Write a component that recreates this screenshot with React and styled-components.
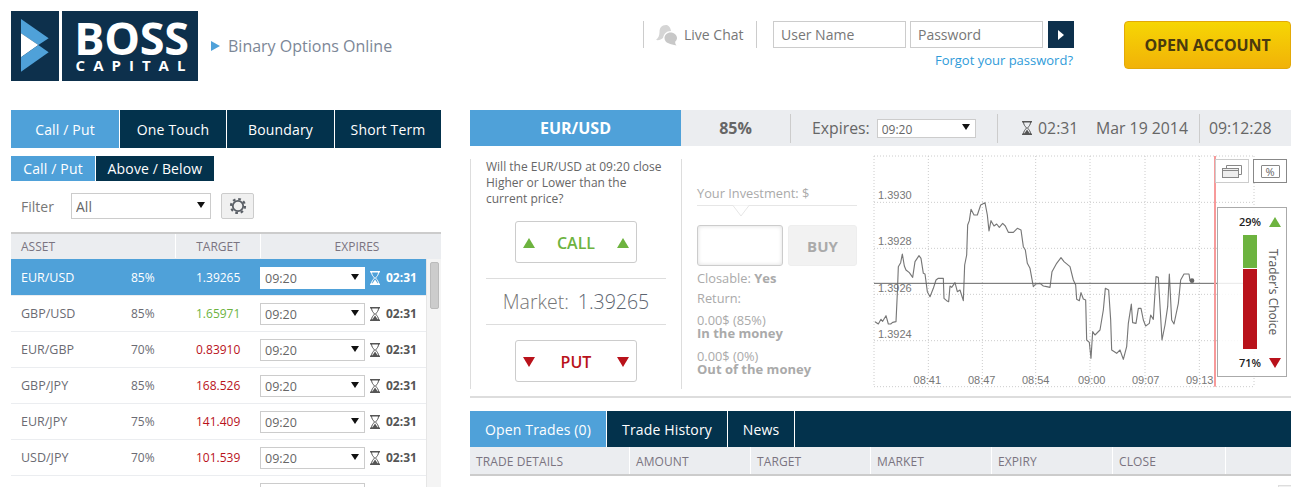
import React from 'react';
import styled, { createGlobalStyle } from 'styled-components';

const BLUE = '#4fa1d9';
const NAVY = '#03324c';
const PALE = '#ebedf0';
const GREEN = '#6db33f';
const RED = '#b9121b';

const GlobalStyle = createGlobalStyle`
    html, body {
        margin: 0;
        padding: 0;
        background: #fff;
        overflow: hidden;
    }
    body {
        font-family: 'Open Sans', 'Liberation Sans', sans-serif;
        color: #777;
    }
    * {
        box-sizing: border-box;
    }
`;

const Page = styled.div`
    width: 1302px;
    height: 487px;
    overflow: hidden;
`;

/* header */
const Header = styled.header`
    display: flex;
    align-items: flex-start;
    height: 110px;
    padding: 11px 11px 0;
`;
const Logo = styled.div`
    display: flex;
    gap: 3px;
    height: 70px;
`;
const LogoMark = styled.div`
    width: 48px;
    height: 70px;
    background: #0d304c;
    svg {
        display: block;
    }
`;
const LogoWords = styled.div`
    width: 136px;
    height: 70px;
    background: #0d304c;
    color: #fff;
    text-align: center;
    font-weight: 700;
`;
const LogoBoss = styled.div`
    font-size: 45px;
    line-height: 44px;
    margin: 5px 0 0 3px;
    letter-spacing: -0.3px;
`;
const LogoCapital = styled.div`
    font-size: 15px;
    line-height: 15px;
    letter-spacing: 8px;
    margin: -2px 0 0 9px;
`;
const Tagline = styled.div`
    display: flex;
    align-items: center;
    gap: 8px;
    margin: 24px 0 0 13px;
    font-size: 16px;
    line-height: 22px;
    color: #7c8797;
`;
const TaglineArrow = styled.span`
    width: 0;
    height: 0;
    border-left: 9px solid ${BLUE};
    border-top: 5.5px solid transparent;
    border-bottom: 5.5px solid transparent;
`;
const HeaderRight = styled.div`
    display: flex;
    align-items: flex-start;
    margin: 10px 0 0 auto;
`;
const Chat = styled.div`
    display: flex;
    align-items: center;
    gap: 6px;
    width: 114px;
    height: 27px;
    padding-left: 12px;
    border-left: 1px solid #ccc;
    border-right: 1px solid #ccc;
    font-size: 14px;
`;
const Login = styled.div`
    width: 301px;
    margin-left: 16px;
`;
const LoginRow = styled.div`
    display: flex;
    gap: 4px;
`;
const LoginInput = styled.input`
    width: 133px;
    height: 27px;
    padding: 0 7px;
    border: 1px solid #ccc;
    background: #fff;
    font: 14px 'Open Sans', sans-serif;
    outline: none;
    &::placeholder {
        color: #777;
        opacity: 1;
    }
`;
const LoginButton = styled.button`
    display: flex;
    align-items: center;
    justify-content: center;
    width: 26px;
    height: 27px;
    margin-left: 1px;
    padding: 0;
    border: 0;
    background: #0d304c;
    &::after {
        content: '';
        border-left: 6px solid #fff;
        border-top: 5px solid transparent;
        border-bottom: 5px solid transparent;
    }
`;
const Forgot = styled.a`
    display: block;
    margin: 3px 1px 0 0;
    text-align: right;
    font-size: 13px;
    line-height: 18px;
    color: #2f9bd9;
`;
const OpenAccount = styled.button`
    width: 167px;
    height: 48px;
    margin-left: 50px;
    border: 1px solid #e3a908;
    border-radius: 4px;
    background: linear-gradient(#f6d604, #f1b208);
    color: #4a3a0e;
    font: 700 16px 'Open Sans', sans-serif;
    letter-spacing: -0.1px;
`;

/* main two column layout */
const Main = styled.main`
    display: flex;
    gap: 29px;
    padding-left: 11px;
`;
const LeftColumn = styled.section`
    width: 430px;
`;
const RightColumn = styled.section`
    width: 821px;
`;

/* tabs */
const TabBar = styled.div`
    display: flex;
    gap: 1px;
    height: ${(p) => p.$height}px;
    margin-top: ${(p) => p.$top || 0}px;
`;
const Tab = styled.div`
    display: flex;
    align-items: center;
    justify-content: center;
    flex: ${(p) => (p.$width ? `0 0 ${p.$width}px` : '1')};
    background: ${(p) => (p.$active ? BLUE : NAVY)};
    color: #fff;
    font-size: 14px;
    letter-spacing: 0.15px;
`;

/* selects */
const SelectWrap = styled.div`
    position: relative;
    flex: none;
    width: ${(p) => p.$width}px;
    height: ${(p) => p.$height}px;
    &::after {
        content: '';
        position: absolute;
        right: 6px;
        top: 50%;
        margin-top: -4px;
        border-top: 6px solid #111;
        border-left: 4px solid transparent;
        border-right: 4px solid transparent;
        pointer-events: none;
    }
`;
const NativeSelect = styled.select`
    appearance: none;
    display: block;
    width: 100%;
    height: 100%;
    padding: 1px 0 0 ${(p) => p.$pad}px;
    border: ${(p) => (p.$light ? '1px solid #fff' : '1px solid #ccc')};
    border-radius: 0;
    background: #fff;
    color: #666;
    font: ${(p) => p.$size}px 'Open Sans', sans-serif;
    outline: none;
`;
const Select = ({ value, width, height, pad = 4, size = 12.500, light }) => (
    <SelectWrap $width={width} $height={height}>
        <NativeSelect defaultValue={value} $pad={pad} $size={size} $light={light}>
            <option>{value}</option>
        </NativeSelect>
    </SelectWrap>
);

const Hourglass = ({ color = '#555', height = 14 }) => (
    <svg width={height * 0.72} height={height} viewBox="0 0 10 14" fill="none" style={{ color, flex: 'none' }}>
        <path d="M0 .7h10M0 13.3h10" stroke="currentColor" strokeWidth="1.4" />
        <path d="M1.500 1c0 3 1.500 4 3 6-1.500 2-3 3-3 6M8.500 1c0 3-1.500 4-3 6 1.500 2 3 3 3 6" stroke="currentColor" strokeWidth="1" />
        <path d="M5 8.500 2 13h6z" fill="currentColor" />
    </svg>
);

/* asset filter */
const FilterRow = styled.div`
    display: flex;
    align-items: center;
    height: 26px;
    margin-top: 12px;
    padding-left: 10px;
    font-size: 14px;
`;
const FilterLabel = styled.span`
    width: 50px;
`;
const GearButton = styled.div`
    display: flex;
    align-items: center;
    justify-content: center;
    width: 33px;
    height: 26px;
    margin-left: 10px;
    border: 1px solid #ccc;
    border-radius: 2px;
    background: #f0f0f0;
`;

/* asset table */
const AssetHead = styled.div`
    display: grid;
    grid-template-columns: 164px 85px 1fr;
    height: 27px;
    margin-top: 13px;
    padding-bottom: 1px;
    border-top: 2px solid #ccc;
    background: ${PALE};
    font-size: 12px;
`;
const AssetHeadCell = styled.div`
    display: flex;
    align-items: center;
    justify-content: ${(p) => (p.$first ? 'flex-start' : 'center')};
    padding-left: ${(p) => p.$pad || 0}px;
    border-left: ${(p) => (p.$first ? '0' : '1px solid #fff')};
    color: #7a7480;
`;
const AssetBody = styled.div`
    display: flex;
    height: 228px;
    overflow: hidden;
`;
const AssetRows = styled.div`
    width: 415px;
`;
const AssetRow = styled.div`
    display: grid;
    grid-template-columns: 110px 65px 64px 105px 21px 1fr;
    align-items: center;
    height: 36px;
    padding-left: 10px;
    border-bottom: 1px solid #ebedf0;
    font-size: 12px;
    color: ${(p) => (p.$active ? '#fff' : '#6b6b73')};
    background: ${(p) => (p.$active ? BLUE : '#fff')};
    &:first-child {
        height: 37px;
        padding-top: 1px;
    }
`;
const AssetName = styled.span`
    font-size: 12.500px;
`;
const Target = styled.span`
    color: ${(p) => p.$color || 'inherit'};
`;
const RowTimer = styled.span`
    display: flex;
    align-items: center;
    padding-left: 5px;
`;
const RowTime = styled.span`
    font-weight: 700;
    color: ${(p) => (p.$active ? '#fff' : '#555')};
`;
const ScrollTrack = styled.div`
    width: 15px;
    padding: 3px 2px 0 3px;
    border-left: 1px solid #e6e6e6;
    background: #f4f4f4;
`;
const ScrollThumb = styled.div`
    height: 47px;
    border: 1px solid #bbb;
    border-radius: 2px;
    background: #ccc;
`;

/* instrument bar */
const InstrumentBar = styled.div`
    display: flex;
    align-items: center;
    height: 36px;
    background: ${PALE};
    color: #666;
`;
const InstrumentName = styled.div`
    display: flex;
    align-items: center;
    justify-content: center;
    align-self: stretch;
    width: 211px;
    background: ${BLUE};
    color: #fff;
    font-size: 16px;
    font-weight: 700;
`;
const Payout = styled.div`
    width: 109px;
    text-align: center;
    font-size: 16px;
    font-weight: 700;
`;
const BarCell = styled.div`
    display: flex;
    align-items: center;
    width: ${(p) => p.$width}px;
    height: 29px;
    padding-left: ${(p) => p.$pad}px;
    border-left: 1px solid #ccc;
    font-size: 15.800px;
    gap: ${(p) => p.$gap || 0}px;
`;
const BarTime = styled.span`
    width: 58px;
    margin-left: 6px;
`;

/* trade area */
const TradeArea = styled.div`
    display: flex;
    height: 252px;
    padding-top: 4px;
    border-bottom: 2px solid #ddd;
`;
const QuestionPanel = styled.div`
    width: 212px;
    height: 230px;
    margin-top: 9px;
    padding: 0 15px;
    border-left: 1px solid #ddd;
    border-right: 1px solid #ddd;
`;
const Question = styled.p`
    margin: 0 0 14px;
    font-size: 12px;
    line-height: 16px;
    color: #666;
`;
const TradeButton = styled.div`
    display: flex;
    align-items: center;
    justify-content: space-between;
    width: 122px;
    height: 42px;
    margin: 0 auto;
    padding: 1px 7px 0;
    border: 1px solid #ccc;
    border-radius: 3px;
    font-size: 16px;
    font-weight: 600;
    color: ${(p) => p.$color};
`;
const Triangle = styled.span`
    width: 0;
    height: 0;
    border-left: 6.500px solid transparent;
    border-right: 6.500px solid transparent;
    ${(p) => (p.$down ? 'border-top' : 'border-bottom')}: 10px solid ${(p) => p.$color};
`;
const MarketRow = styled.div`
    display: flex;
    align-items: center;
    justify-content: center;
    gap: 9px;
    height: 47px;
    margin: 15px 0;
    border-top: 1px solid #ddd;
    border-bottom: 1px solid #ddd;
    font-size: 19.500px;
    font-weight: 300;
    color: #777;
`;
const MarketValue = styled.span`
    color: #5c6470;
`;
const InvestPanel = styled.div`
    width: 188px;
    padding: 35px 13px 0 15px;
    font-size: 12.800px;
    color: #aaa;
`;
const InvestLabel = styled.div`
    position: relative;
    padding-bottom: 4px;
    border-bottom: 1px solid #e6e6e6;
    line-height: 16px;
    svg {
        position: absolute;
        left: 36px;
        top: 20px;
    }
`;
const InvestRow = styled.div`
    display: flex;
    gap: 5px;
    height: 41px;
    margin: 19px 0 4px;
`;
const AmountInput = styled.input`
    width: 86px;
    border: 1px solid #ccc;
    border-radius: 3px;
    box-shadow: inset 0 0 4px #ddd;
    outline: none;
`;
const BuyButton = styled.div`
    display: flex;
    align-items: center;
    justify-content: center;
    width: 69px;
    border: 1px solid #eee;
    border-radius: 3px;
    background: #f2f2f2;
    color: #aaa;
    font-size: 15px;
    font-weight: 700;
`;
const InfoLine = styled.div`
    margin-top: ${(p) => p.$top || 0}px;
    line-height: 16px;
`;
const ReturnBlock = styled.div`
    margin-top: ${(p) => p.$top}px;
    line-height: 13px;
`;
const Strong = styled.b`
    font-weight: 700;
    font-size: 13px;
`;

/* chart */
const ChartPane = styled.div`
    position: relative;
    width: 421px;
    height: 248px;
    svg.plot {
        display: block;
        font-family: 'Liberation Sans', Arial, sans-serif;
    }
`;
const ChartButton = styled.div`
    position: absolute;
    left: ${(p) => p.$left}px;
    top: 9px;
    display: flex;
    align-items: center;
    justify-content: center;
    width: 34px;
    height: 24px;
    background: #fff;
    border: 1px solid ${(p) => (p.$dark ? '#888' : '#ccc')};
`;
const PercentTag = styled.span`
    display: block;
    width: 19px;
    height: 13px;
    border: 1px solid #888;
    border-radius: 1px;
    text-align: center;
    font-size: 11px;
    line-height: 11px;
    color: #666;
`;
const ChoicePanel = styled.div`
    position: absolute;
    left: 347px;
    top: 57px;
    display: flex;
    flex-direction: column;
    width: 70px;
    height: 170px;
    border: 1px solid #aaa;
    background: rgba(255, 255, 255, 0.85);
`;
const ChoiceHead = styled.div`
    display: flex;
    align-items: center;
    gap: 8px;
    height: 27px;
    padding-left: 21px;
    font-size: 11px;
    font-weight: 600;
    color: #222;
`;
const ChoiceMiddle = styled.div`
    display: flex;
    align-items: center;
    height: 114px;
    padding-left: 25px;
`;
const ChoiceBar = styled.div`
    display: flex;
    flex-direction: column;
    gap: 1px;
    width: 14px;
    height: 100%;
`;
const ChoiceFill = styled.div`
    flex: ${(p) => p.$share};
    background: ${(p) => p.$color};
`;
const ChoiceLabel = styled.div`
    margin-left: 8px;
    writing-mode: vertical-rl;
    font-size: 12px;
    line-height: 16px;
    color: #555;
`;

/* open trades */
const TradesTabs = styled.div`
    display: flex;
    height: 36px;
    margin-top: 13px;
    background: ${NAVY};
`;
const TradesTab = styled.div`
    display: flex;
    align-items: center;
    justify-content: center;
    width: ${(p) => p.$width}px;
    border-right: 1px solid #fff;
    background: ${(p) => (p.$active ? BLUE : NAVY)};
    color: #fff;
    font-size: 14px;
    letter-spacing: 0.15px;
`;
const TradesHead = styled.div`
    display: grid;
    grid-template-columns: 160px 121px 120px 121px 121px 113px 1fr;
    height: 29px;
    border-bottom: 2px solid #ccc;
    background: ${PALE};
`;
const TradesHeadCell = styled.div`
    display: flex;
    align-items: center;
    padding: 2px 0 0 6px;
    border-right: 1px solid #fff;
    font-size: 12px;
    letter-spacing: 0.1px;
    color: #7a7480;
`;
const TradesScroll = styled.div`
    width: 13px;
    height: 12px;
    margin: 9px 0 0 auto;
    border-left: 1px solid #ddd;
    border-top: 1px solid #ddd;
    background: #f0f0f0;
`;

const assets = [
    { name: 'EUR/USD', pct: '85%', target: '1.39265', time: '02:31', active: true },
    { name: 'GBP/USD', pct: '85%', target: '1.65971', time: '02:31', color: GREEN },
    { name: 'EUR/GBP', pct: '70%', target: '0.83910', time: '02:31', color: RED },
    { name: 'GBP/JPY', pct: '85%', target: '168.526', time: '02:31', color: RED },
    { name: 'EUR/JPY', pct: '75%', target: '141.409', time: '02:31', color: RED },
    { name: 'USD/JPY', pct: '70%', target: '101.539', time: '02:31', color: RED },
    { name: '', pct: '', target: '', time: '' },
];

const linePoints =
    '15,515 25,522 33,508 38,514 48,497 55,522 62,522 68,517 78,515 82,430 85,350 92,338 97,312 103,348 108,360 118,368 128,382 135,335 147,317 153,325 160,370 165,372 172,425 180,440 190,415 198,390 205,385 220,385 222,445 230,452 236,455 240,408 245,412 255,398 262,425 270,420 280,452 284,345 290,315 293,225 298,212 303,178 312,195 322,195 332,165 345,158 352,195 357,243 363,212 372,228 380,222 388,232 398,220 406,228 415,247 430,247 442,235 453,240 460,290 466,300 472,340 480,355 490,410 497,402 510,400 520,408 530,410 540,412 546,365 560,340 573,323 582,335 600,350 610,390 617,405 620,448 628,452 633,428 640,447 647,450 650,570 658,577 663,625 668,545 675,555 690,540 700,480 706,415 716,420 722,510 725,600 740,610 750,600 760,628 770,590 775,520 784,462 788,518 798,520 805,475 813,475 820,510 827,528 838,520 842,495 850,508 858,380 865,382 876,570 885,525 893,470 898,372 905,510 912,522 925,460 932,390 942,372 957,372 960,392 966,392';

const gridX = [12, 175, 337, 497, 660, 825, 988, 1152];
const gridY = [18, 157, 295, 433, 572, 710];
const priceLabels = [
    ['1.3930', 147],
    ['1.3928', 285],
    ['1.3926', 425],
    ['1.3924', 564],
];
const timeLabels = [
    ['08:41', 172],
    ['08:47', 335],
    ['08:54', 497],
    ['09:00', 665],
    ['09:07', 827],
    ['09:13', 989],
];

const PriceChart = () => (
    <svg className="plot" width="421" height="248" viewBox="0 0 1263 744">
        {gridX.map((x) => (
            <line key={x} x1={x} y1="18" x2={x} y2="710" stroke="#ccc" strokeWidth="3" strokeDasharray="3 6" />
        ))}
        {gridY.map((y) => (
            <line key={y} x1="12" y1={y} x2="1152" y2={y} stroke="#ccc" strokeWidth="3" strokeDasharray="3 6" />
        ))}
        {priceLabels.map(([text, y]) => (
            <text key={text} x="24" y={y} fontSize="33" fill="#777">
                {text}
            </text>
        ))}
        {timeLabels.map(([text, x]) => (
            <text key={text} x={x} y="701" fontSize="33" fill="#777" textAnchor="middle">
                {text}
            </text>
        ))}
        <polyline points={linePoints} fill="none" stroke="#777" strokeWidth="3.400" strokeLinejoin="round" />
        <circle cx="966" cy="392" r="7" fill="#666" />
        <line x1="12" y1="400" x2="1160" y2="400" stroke="#666" strokeWidth="3" />
        <rect x="1032" y="18" width="6" height="692" fill="#f79a9a" />
    </svg>
);

const LogoArrow = () => (
    <svg width="48" height="70" viewBox="33 33 144 210">
        <path d="M63 57 146 115 115 135 63 100z" fill="#4fa1d9" />
        <path d="M63 100 115 135 63 172z" fill="#fff" />
        <path d="M63 172 115 135 146 157 63 215z" fill="#4fa1d9" />
    </svg>
);

const ChatIcon = () => (
    <svg width="22" height="22" viewBox="0 0 22 22">
        <path d="M10 1C5.500 1 3.500 4 3.500 8c0 3-1 6-3.500 8 3 .5 5.500-.5 7-2 1-4 3-7 8-7-.5-3.500-2.500-6-5-6z" fill="#d5d5d5" />
        <path d="M14.500 8.500c-3.500 0-6 2.500-6 5.500 0 2.500 1.500 4.500 4 5.300 2 1 5 1.700 8 2.200-1.200-1.500-1.500-2.800-1.200-4 1.200-1 1.700-2.300 1.700-3.500 0-3-2.800-5.500-6.500-5.500z" fill="#c8c8c8" />
    </svg>
);

const GearIcon = () => (
    <svg width="18" height="18" viewBox="0 0 18 18" fill="none" stroke="#5a5f66">
        <circle cx="9" cy="9" r="5.200" strokeWidth="1.800" />
        <circle cx="9" cy="9" r="7" strokeWidth="2.200" strokeDasharray="2.700 2.800" />
    </svg>
);

const WindowsIcon = () => (
    <svg width="20" height="13" viewBox="0 0 20 13" fill="none" stroke="#888">
        <path d="M4.500 3V.5h15v9H17" />
        <rect x=".5" y="3.500" width="16" height="9" fill="#eee" />
        <path d="M.5 5.500h16" />
    </svg>
);

const App = () => (
    <Page>
        <GlobalStyle />
        <Header>
            <Logo>
                <LogoMark>
                    <LogoArrow />
                </LogoMark>
                <LogoWords>
                    <LogoBoss>BOSS</LogoBoss>
                    <LogoCapital>CAPITAL</LogoCapital>
                </LogoWords>
            </Logo>
            <Tagline>
                <TaglineArrow />
                Binary Options Online
            </Tagline>
            <HeaderRight>
                <Chat>
                    <ChatIcon />
                    Live Chat
                </Chat>
                <Login>
                    <LoginRow>
                        <LoginInput placeholder="User Name" />
                        <LoginInput placeholder="Password" />
                        <LoginButton />
                    </LoginRow>
                    <Forgot>Forgot your password?</Forgot>
                </Login>
                <OpenAccount>OPEN ACCOUNT</OpenAccount>
            </HeaderRight>
        </Header>
        <Main>
            <LeftColumn>
                <TabBar $height={38}>
                    <Tab $active $width={108}>Call / Put</Tab>
                    <Tab $width={106}>One Touch</Tab>
                    <Tab $width={107}>Boundary</Tab>
                    <Tab>Short Term</Tab>
                </TabBar>
                <TabBar $height={25} $top={8}>
                    <Tab $active $width={84}>Call / Put</Tab>
                    <Tab $width={118}>Above / Below</Tab>
                </TabBar>
                <FilterRow>
                    <FilterLabel>Filter</FilterLabel>
                    <Select value="All" width={140} height={26} size={14} />
                    <GearButton>
                        <GearIcon />
                    </GearButton>
                </FilterRow>
                <AssetHead>
                    <AssetHeadCell $first $pad={10}>ASSET</AssetHeadCell>
                    <AssetHeadCell>TARGET</AssetHeadCell>
                    <AssetHeadCell $pad={12}>EXPIRES</AssetHeadCell>
                </AssetHead>
                <AssetBody>
                    <AssetRows>
                        {assets.map((a, i) => (
                            <AssetRow key={i} $active={a.active}>
                                <AssetName>{a.name}</AssetName>
                                <span>{a.pct}</span>
                                <Target $color={a.color}>{a.target}</Target>
                                <Select value="09:20" width={105} height={22} light={a.active} />
                                <RowTimer>
                                    {a.time && <Hourglass color={a.active ? '#fff' : '#555'} />}
                                </RowTimer>
                                <RowTime $active={a.active}>{a.time}</RowTime>
                            </AssetRow>
                        ))}
                    </AssetRows>
                    <ScrollTrack>
                        <ScrollThumb />
                    </ScrollTrack>
                </AssetBody>
            </LeftColumn>
            <RightColumn>
                <InstrumentBar>
                    <InstrumentName>EUR/USD</InstrumentName>
                    <Payout>85%</Payout>
                    <BarCell $width={207} $pad={21} $gap={7}>
                        Expires:
                        <Select value="09:20" width={99} height={19} size={12} />
                    </BarCell>
                    <BarCell $width={202} $pad={24}>
                        <Hourglass />
                        <BarTime>02:31</BarTime>
                        Mar 19 2014
                    </BarCell>
                    <BarCell $width={92} $pad={9}>09:12:28</BarCell>
                </InstrumentBar>
                <TradeArea>
                    <QuestionPanel>
                        <Question>Will the EUR/USD at 09:20 close Higher or Lower than the current price?</Question>
                        <TradeButton $color={GREEN}>
                            <Triangle $color={GREEN} />
                            CALL
                            <Triangle $color={GREEN} />
                        </TradeButton>
                        <MarketRow>
                            Market:
                            <MarketValue>1.39265</MarketValue>
                        </MarketRow>
                        <TradeButton $color={RED}>
                            <Triangle $down $color={RED} />
                            PUT
                            <Triangle $down $color={RED} />
                        </TradeButton>
                    </QuestionPanel>
                    <InvestPanel>
                        <InvestLabel>
                            Your Investment: $
                            <svg width="16" height="12" viewBox="0 0 16 12">
                                <path d="M0 0.500 8 11 16 0.500" fill="#fff" stroke="#e6e6e6" />
                            </svg>
                        </InvestLabel>
                        <InvestRow>
                            <AmountInput />
                            <BuyButton>BUY</BuyButton>
                        </InvestRow>
                        <InfoLine>
                            Closable: <Strong>Yes</Strong>
                        </InfoLine>
                        <InfoLine $top={4}>Return:</InfoLine>
                        <ReturnBlock $top={8}>
                            0.00$ (85%)
                            <br />
                            <Strong>In the money</Strong>
                        </ReturnBlock>
                        <ReturnBlock $top={10}>
                            0.00$ (0%)
                            <br />
                            <Strong>Out of the money</Strong>
                        </ReturnBlock>
                    </InvestPanel>
                    <ChartPane>
                        <PriceChart />
                        <ChartButton $left={345}>
                            <WindowsIcon />
                        </ChartButton>
                        <ChartButton $left={383} $dark>
                            <PercentTag>%</PercentTag>
                        </ChartButton>
                        <ChoicePanel>
                            <ChoiceHead>
                                29%
                                <Triangle $color={GREEN} />
                            </ChoiceHead>
                            <ChoiceMiddle>
                                <ChoiceBar>
                                    <ChoiceFill $share={29} $color={GREEN} />
                                    <ChoiceFill $share={71} $color={RED} />
                                </ChoiceBar>
                                <ChoiceLabel>Trader's Choice</ChoiceLabel>
                            </ChoiceMiddle>
                            <ChoiceHead>
                                71%
                                <Triangle $down $color={RED} />
                            </ChoiceHead>
                        </ChoicePanel>
                    </ChartPane>
                </TradeArea>
                <TradesTabs>
                    <TradesTab $active $width={137}>Open Trades (0)</TradesTab>
                    <TradesTab $width={121}>Trade History</TradesTab>
                    <TradesTab $width={67}>News</TradesTab>
                </TradesTabs>
                <TradesHead>
                    <TradesHeadCell>TRADE DETAILS</TradesHeadCell>
                    <TradesHeadCell>AMOUNT</TradesHeadCell>
                    <TradesHeadCell>TARGET</TradesHeadCell>
                    <TradesHeadCell>MARKET</TradesHeadCell>
                    <TradesHeadCell>EXPIRY</TradesHeadCell>
                    <TradesHeadCell>CLOSE</TradesHeadCell>
                    <div />
                </TradesHead>
                <TradesScroll />
            </RightColumn>
        </Main>
    </Page>
);

export default App;
